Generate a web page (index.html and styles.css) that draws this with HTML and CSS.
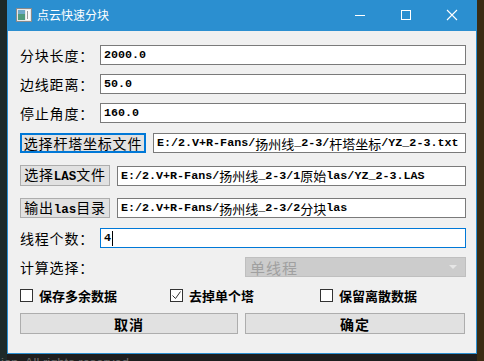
FILE: index.html
```html
<!DOCTYPE html>
<html lang="zh-CN">
<head>
    <meta charset="UTF-8">
    <title>点云快速分块</title>
    <link rel="stylesheet" href="styles.css">
</head>
<body>
<div class="desktop">
    <div class="window">
        <div class="titlebar">
            <svg class="app-icon" width="16" height="14" viewBox="0 0 16 14">
                <rect x="0.5" y="0.5" width="15" height="13" fill="#e8e8e8" stroke="#8a8a8a"/>
                <rect x="2" y="2" width="7" height="10" fill="#4f9a7c"/>
                <rect x="2" y="2" width="7" height="4" fill="#6fa9c9"/>
                <rect x="10" y="2" width="4" height="10" fill="#fafafa"/>
                <rect x="11" y="3" width="1" height="8" fill="#9a9a9a"/>
            </svg>
            <span class="title">点云快速分块</span>
            <div class="caption-buttons">
                <svg width="12" height="12" viewBox="0 0 12 12"><path d="M1 6.5h10" stroke="#fff" stroke-width="1"/></svg>
                <svg width="12" height="12" viewBox="0 0 12 12"><rect x="1.5" y="1.5" width="9" height="9" fill="none" stroke="#fff"/></svg>
                <svg width="12" height="12" viewBox="0 0 12 12"><path d="M1 1l10 10M11 1L1 11" stroke="#fff" stroke-width="1.1"/></svg>
            </div>
        </div>

        <div class="content">
            <div class="row r1">
                <span class="label">分块长度：</span>
                <div class="field">2000.0</div>
            </div>
            <div class="row r2">
                <span class="label">边线距离：</span>
                <div class="field">50.0</div>
            </div>
            <div class="row r3">
                <span class="label">停止角度：</span>
                <div class="field">160.0</div>
            </div>
            <div class="row r4">
                <button class="btn default wide">选择杆塔坐标文件</button>
                <div class="field path">E:/2.V+R-Fans/<span class="cjk">扬州线</span>_2-3/<span class="cjk">杆塔坐标</span>/YZ_2-3.txt</div>
            </div>
            <div class="row r5">
                <button class="btn mid">选择<span class="lat">LAS</span>文件</button>
                <div class="field path">E:/2.V+R-Fans/<span class="cjk">扬州线</span>_2-3/1<span class="cjk">原始</span>las/YZ_2-3.LAS</div>
            </div>
            <div class="row r6">
                <button class="btn mid">输出<span class="lat">las</span>目录</button>
                <div class="field path">E:/2.V+R-Fans/<span class="cjk">扬州线</span>_2-3/2<span class="cjk">分块</span>las</div>
            </div>
            <div class="row r7">
                <span class="label">线程个数：</span>
                <div class="field focused">4<span class="caret"></span></div>
            </div>
            <div class="row r8">
                <span class="label">计算选择：</span>
                <div class="combo">
                    <span>单线程</span>
                    <svg width="8" height="5" viewBox="0 0 8 5"><path d="M0 0h8L4 4z" fill="#e6e6e6"/></svg>
                </div>
            </div>
            <div class="checks">
                <label class="check"><span class="box"></span>保存多余数据</label>
                <label class="check"><span class="box">
                    <svg width="11" height="11" viewBox="0 0 11 11"><path d="M1.5 5.5l3 3 5-7" fill="none" stroke="#333" stroke-width="1"/></svg>
                </span>去掉单个塔</label>
                <label class="check"><span class="box"></span>保留离散数据</label>
            </div>
            <div class="actions">
                <button class="btn action">取消</button>
                <button class="btn action">确定</button>
            </div>
        </div>
    </div>
    <div class="footer">ion. All rights reserved</div>
</div>
</body>
</html>
```

FILE: styles.css
```css
* {
    box-sizing: border-box;
}

body {
    margin: 0;
    width: 484px;
    height: 361px;
    overflow: hidden;
    background: linear-gradient(to right, #1d2a29 0 7px, #1e1e1e 7px 477px, #3a2c13 477px);
    font-family: "Noto Sans CJK SC", sans-serif;
}

.desktop {
    padding-left: 7px;
}

.window {
    width: 470px;
    height: 354px;
    border: 1px solid #2b8fd0;
    border-top: none;
    background: #f0f0f0;
    display: flex;
    flex-direction: column;
}

.titlebar {
    height: 31px;
    margin: 0 -1px;
    background: #2b8fd0;
    display: flex;
    align-items: center;
    padding-left: 9px;
    color: #fff;
}

.app-icon {
    margin-top: -1px;
}

.title {
    margin-left: 5px;
    font-size: 12px;
    line-height: 1;
    margin-top: -1px;
}

.caption-buttons {
    margin-left: auto;
    display: flex;
    gap: 34px;
    padding-right: 19px;
    margin-top: -1px;
}

.content {
    padding: 14px 10px 0 12px;
    font-size: 14px;
    color: #000;
}

.row {
    display: flex;
    align-items: center;
    height: 20px;
}

.r2, .r3 { margin-top: 9px; }
.r4 { margin-top: 10px; }
.r5 { margin-top: 12px; height: 21px; }
.r6 { margin-top: 12px; }
.r7 { margin-top: 10px; }
.r8 { margin-top: 9px; }

.label {
    width: 80px;
    letter-spacing: 0.8px;
    line-height: 1;
}

.field {
    flex: 1;
    height: 20px;
    background: #fff;
    border: 1px solid #7a7a7a;
    padding: 0 3px;
    display: flex;
    align-items: center;
    font-family: "Liberation Mono", "Noto Sans CJK SC", monospace;
    font-size: 11.7px;
    font-weight: bold;
    white-space: nowrap;
    overflow: hidden;
}

.field .cjk {
    font-family: "Noto Sans CJK SC", sans-serif;
    font-size: 13px;
    font-weight: normal;
}

.field.focused {
    border-color: #0078d7;
}

.caret {
    width: 1px;
    height: 15px;
    background: #000;
    margin-left: 1px;
}

.path {
    margin-left: 7px;
}

.btn {
    height: 100%;
    padding: 0;
    background: #e1e1e1;
    border: 1px solid #adadad;
    font-family: "Noto Sans CJK SC", sans-serif;
    font-size: 14px;
    color: #000;
    letter-spacing: 0.8px;
    line-height: 1;
}

.btn .lat {
    font-family: "Liberation Mono", monospace;
    font-weight: bold;
    font-size: 12.5px;
    letter-spacing: 0;
}

.btn.default {
    border: 2px solid #0078d7;
}

.wide {
    width: 126px;
}

.mid {
    width: 90px;
}

.combo {
    margin-left: 145px;
    flex: 1;
    height: 20px;
    background: #cccccc;
    border: 1px solid #bfbfbf;
    display: flex;
    align-items: center;
    justify-content: space-between;
    padding: 0 8px 0 4px;
    color: #a0a0a0;
    font-size: 15px;
    letter-spacing: 1px;
}

.checks {
    display: grid;
    grid-template-columns: 150px 150px 1fr;
    margin-top: 12px;
    height: 13px;
}

.check {
    display: flex;
    align-items: center;
    font-size: 13px;
    font-weight: bold;
    line-height: 1;
}

.box {
    width: 13px;
    height: 13px;
    border: 1px solid #333;
    background: #fff;
    margin-right: 6px;
    display: flex;
    align-items: center;
    justify-content: center;
}

.actions {
    display: grid;
    grid-template-columns: 218px 220px;
    gap: 7px;
    margin-top: 11px;
    height: 21px;
}

.action {
    font-weight: bold;
    letter-spacing: 1px;
}

.footer {
    color: #6a6a6a;
    font-family: "Liberation Sans", sans-serif;
    font-size: 13px;
    line-height: 1;
    margin-top: 2px;
    padding-left: 0;
    margin-left: -6px;
}
```
